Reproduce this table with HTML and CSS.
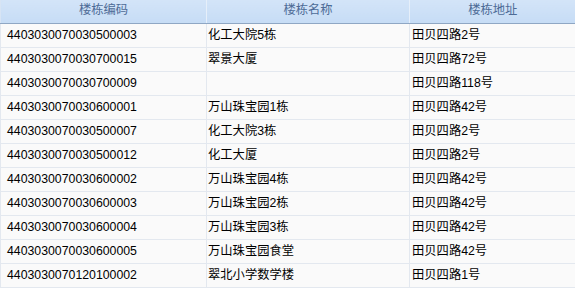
FILE: index.html
```html
<!DOCTYPE html>
<html>
<head>
<meta charset="utf-8">
<link rel="stylesheet" href="styles.css">
</head>
<body>
<table class="grid">
  <colgroup><col class="c1"><col class="c2"><col class="c3"></colgroup>
  <thead>
    <tr><th>楼栋编码</th><th>楼栋名称</th><th>楼栋地址</th></tr>
  </thead>
  <tbody>
    <tr><td class="code">4403030070030500003</td><td class="name">化工大院5栋</td><td class="addr">田贝四路2号</td></tr>
    <tr><td class="code">4403030070030700015</td><td class="name">翠景大厦</td><td class="addr">田贝四路72号</td></tr>
    <tr><td class="code">4403030070030700009</td><td class="name"></td><td class="addr">田贝四路118号</td></tr>
    <tr><td class="code">4403030070030600001</td><td class="name">万山珠宝园1栋</td><td class="addr">田贝四路42号</td></tr>
    <tr><td class="code">4403030070030500007</td><td class="name">化工大院3栋</td><td class="addr">田贝四路2号</td></tr>
    <tr><td class="code">4403030070030500012</td><td class="name">化工大厦</td><td class="addr">田贝四路2号</td></tr>
    <tr><td class="code">4403030070030600002</td><td class="name">万山珠宝园4栋</td><td class="addr">田贝四路42号</td></tr>
    <tr><td class="code">4403030070030600003</td><td class="name">万山珠宝园2栋</td><td class="addr">田贝四路42号</td></tr>
    <tr><td class="code">4403030070030600004</td><td class="name">万山珠宝园3栋</td><td class="addr">田贝四路42号</td></tr>
    <tr><td class="code">4403030070030600005</td><td class="name">万山珠宝园食堂</td><td class="addr">田贝四路42号</td></tr>
    <tr><td class="code">4403030070120100002</td><td class="name">翠北小学数学楼</td><td class="addr">田贝四路1号</td></tr>
  </tbody>
</table>
</body>
</html>
```
FILE: styles.css
```css
html, body {
  margin: 0;
  padding: 0;
  background: #ffffff;
  overflow: hidden;
}
.grid {
  border-collapse: collapse;
  table-layout: fixed;
  width: 575px;
  font-family: "Liberation Sans", "Noto Sans CJK SC", sans-serif;
  font-size: 12.3px;
}
.c1 { width: 206px; }
.c2 { width: 203px; }
.c3 { width: 166px; }
.grid thead tr { height: 23px; }
.grid tbody tr { height: 24px; }
.grid th {
  padding: 0 0 1px 0;
  font-weight: normal;
  color: #4d6b96;
  background: linear-gradient(#d3e4f8, #c6dcf5);
  border-bottom: 1px solid #8fa7c4;
  border-left: 1px solid #e6effa;
  text-align: center;
  line-height: 21px;
}
.grid th:first-child { border-left: 1px solid #d7e4f4; }
.grid td {
  padding: 0;
  background: #fafafa;
  color: #000000;
  border-bottom: 1px solid #e3e8ef;
  border-left: 1px solid #e3e8ef;
  line-height: 23px;
  white-space: nowrap;
  overflow: hidden;
}
.grid td.code { padding-left: 6px; }
.grid td.name { padding-left: 1px; }
.grid td.addr { padding-left: 2px; }
```
